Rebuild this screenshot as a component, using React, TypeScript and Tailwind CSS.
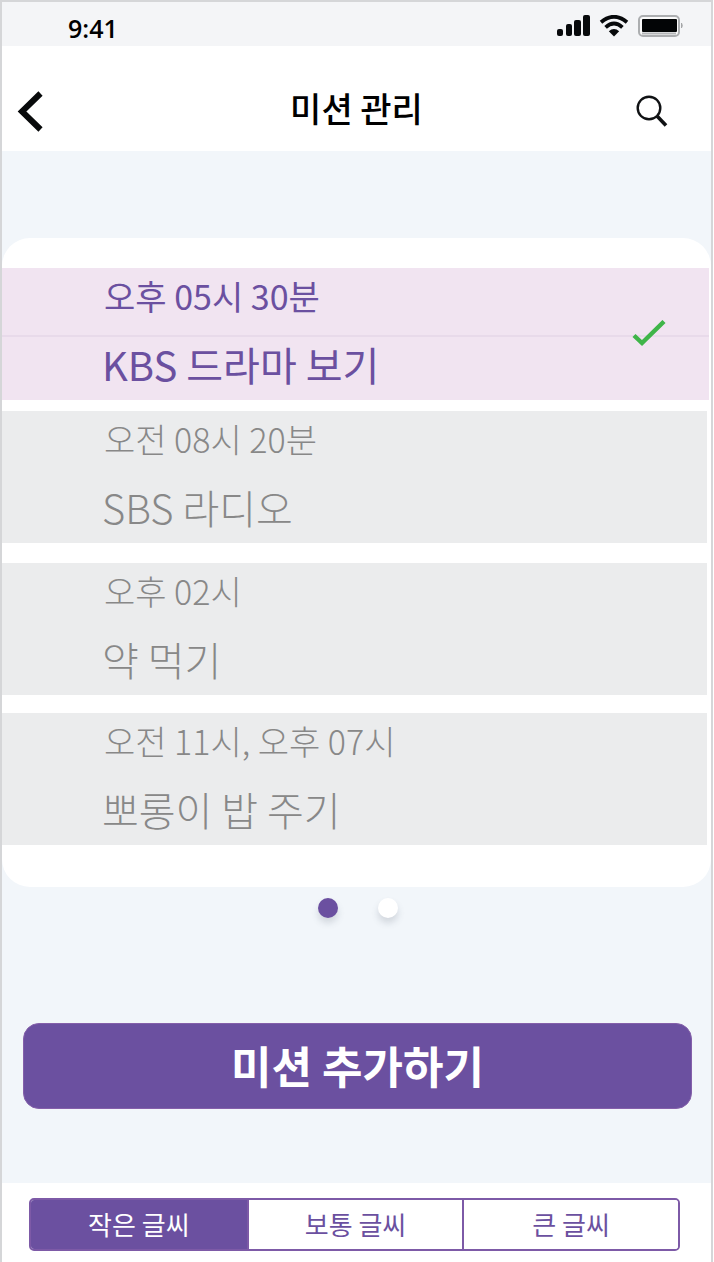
import { useState } from "react";

type Mission = { time: string; title: string };

const missions: Mission[] = [
  { time: "오후 05시 30분", title: "KBS 드라마 보기" },
  { time: "오전 08시 20분", title: "SBS 라디오" },
  { time: "오후 02시", title: "약 먹기" },
  { time: "오전 11시, 오후 07시", title: "뽀롱이 밥 주기" },
];

const rowGaps = ["", "mt-[11px]", "mt-5", "mt-[18px]"];
const fontSizes = ["작은 글씨", "보통 글씨", "큰 글씨"];

function StatusBar() {
  return (
    <div className="flex h-11 items-center justify-between bg-[#f4f5f7] pr-[27px] pl-[66px]">
      <span className="mt-2 font-['Open_Sans',sans-serif] text-[25px] leading-8 font-semibold text-black">9:41</span>
      <div className="mt-1 flex items-center gap-2">
        <svg width="36" height="22" viewBox="0 0 36 22" fill="#080a0c" aria-hidden="true">
          <rect x="2" y="14" width="6" height="7" rx="2" />
          <rect x="11" y="9" width="6" height="12" rx="2" />
          <rect x="19" y="5" width="7" height="16" rx="2" />
          <rect x="28" y="0" width="7" height="21" rx="2" />
        </svg>
        <svg width="30" height="22" viewBox="0 0 30 22" fill="none" stroke="#080a0c" aria-hidden="true">
          <path d="M2 7.2 Q15 -3.6 28 7.2" strokeWidth="3.8" />
          <path d="M6.6 12.4 Q15 4.8 23.4 12.4" strokeWidth="3.8" />
          <path d="M9.8 16.2 Q15 11.6 20.2 16.2 L15 21.4Z" fill="#080a0c" stroke="none" />
        </svg>
        <svg width="47" height="22" viewBox="0 0 47 22" aria-hidden="true">
          <rect x="2" y="1" width="40" height="20" rx="4" fill="#fafafa" stroke="#acaeb0" strokeWidth="2" />
          <rect x="5" y="4" width="35" height="13" rx="1" fill="#030506" />
          <path d="M5 18.5h34" stroke="#b4b6b8" strokeWidth="2" />
          <path d="M44.5 8v5q1.5-2.5 0-5Z" fill="#a4a6a8" stroke="#a4a6a8" />
        </svg>
      </div>
    </div>
  );
}

function Header() {
  return (
    <header className="grid grid-cols-[1fr_auto_1fr] items-center bg-white px-3 pt-9 pb-[19px]">
      <button type="button" aria-label="뒤로" className="justify-self-start">
        <svg width="32" height="50" viewBox="0 0 32 50" fill="none" stroke="#080a0b" strokeWidth="6" aria-hidden="true">
          <path d="M26.5 11.5 8 29.5 26.5 47.5" />
        </svg>
      </button>
      <h1 className="pt-0.5 text-[34px] leading-[48px] font-medium text-black">미션 관리</h1>
      <button type="button" aria-label="검색" className="mt-2 mr-[31px] justify-self-end">
        <svg width="32" height="34" viewBox="0 0 32 34" fill="none" stroke="#101214" aria-hidden="true">
          <circle cx="13" cy="14" r="11.3" strokeWidth="2.4" />
          <path d="m21 22 9 9.5" strokeWidth="3.6" />
        </svg>
      </button>
    </header>
  );
}

export default function App() {
  const [selected, setSelected] = useState(0);
  const [page, setPage] = useState(0);
  const [size, setSize] = useState(0);

  return (
    <div className="mr-px flex min-h-screen flex-col border-2 border-b-0 border-[#d5d6d8] bg-[#f2f6fa] font-['Noto_Sans_CJK_KR',sans-serif]">
      <StatusBar />
      <Header />

      <main className="flex flex-1 flex-col pt-[87px]">
        <section className="rounded-[28px] bg-white pt-[30px] pb-[42px]">
          <ul>
            {missions.map((m, i) => {
              const active = i === selected;
              return (
                <li key={m.title} className={rowGaps[i]}>
                  <button
                    type="button"
                    aria-pressed={active}
                    onClick={() => setSelected(i)}
                    className={
                      active
                        ? "relative mr-0.5 block w-[calc(100%-2px)] bg-[#f1e4f1] text-left text-[#6b50a0]"
                        : "relative mr-1 block w-[calc(100%-4px)] bg-[#ebeced] text-left font-light text-[#888888]"
                    }
                  >
                    <span
                      className={
                        active
                          ? "block border-b-2 border-[#e8daea] pb-3 pl-[102px] text-[34px] leading-[55px]"
                          : "block border-b-2 border-transparent pb-3 pl-[102px] text-[34px] leading-[55px]"
                      }
                    >
                      {m.time}
                    </span>
                    <span className="block pb-[9px] pl-[100px] text-[40px] leading-[54px]">{m.title}</span>
                    {active && (
                      <svg
                        className="absolute top-1/2 right-[43px] -translate-y-1/2"
                        width="34"
                        height="28"
                        viewBox="0 0 34 28"
                        fill="none"
                        stroke="#3fb549"
                        strokeWidth="4.4"
                        aria-hidden="true"
                      >
                        <path d="M2 15.5 10 23 32 1.5" />
                      </svg>
                    )}
                  </button>
                </li>
              );
            })}
          </ul>
        </section>

        <div className="mt-[11px] flex justify-center gap-10 pl-0.5">
          {[0, 1].map((n) => (
            <button
              key={n}
              type="button"
              aria-label={`${n + 1} 페이지`}
              onClick={() => setPage(n)}
              className={
                n === page
                  ? "size-5 rounded-full bg-[#6b50a0] shadow-[0_5px_7px_rgba(80,90,110,0.2)]"
                  : "size-5 rounded-full bg-white shadow-[0_5px_7px_rgba(80,90,110,0.2)]"
              }
            />
          ))}
        </div>

        <div className="mt-[105px] pr-[19px] pl-[21px]">
          <button
            type="button"
            className="block w-full rounded-[16px] border border-[#8560aa] bg-[#6b50a0] pb-0.5 text-[44px] leading-[82px] font-bold text-white"
          >
            미션 추가하기
          </button>
        </div>
      </main>

      <footer className="mt-[74px] bg-white pt-[15px] pr-[31px] pb-[11px] pl-[27px]">
        <div role="group" aria-label="글씨 크기" className="grid grid-cols-3 overflow-hidden rounded-[5px] border-2 border-[#7d5aa7]">
          {fontSizes.map((label, i) => (
            <button
              key={label}
              type="button"
              aria-pressed={i === size}
              onClick={() => setSize(i)}
              className={
                i === size
                  ? "border-l-2 border-[#7d5aa7] bg-[#6b50a0] pb-px text-[26px] leading-[48px] text-white first:border-l-0"
                  : "border-l-2 border-[#7d5aa7] bg-white pb-px text-[26px] leading-[48px] text-[#6b50a0] first:border-l-0"
              }
            >
              {label}
            </button>
          ))}
        </div>
      </footer>
    </div>
  );
}
